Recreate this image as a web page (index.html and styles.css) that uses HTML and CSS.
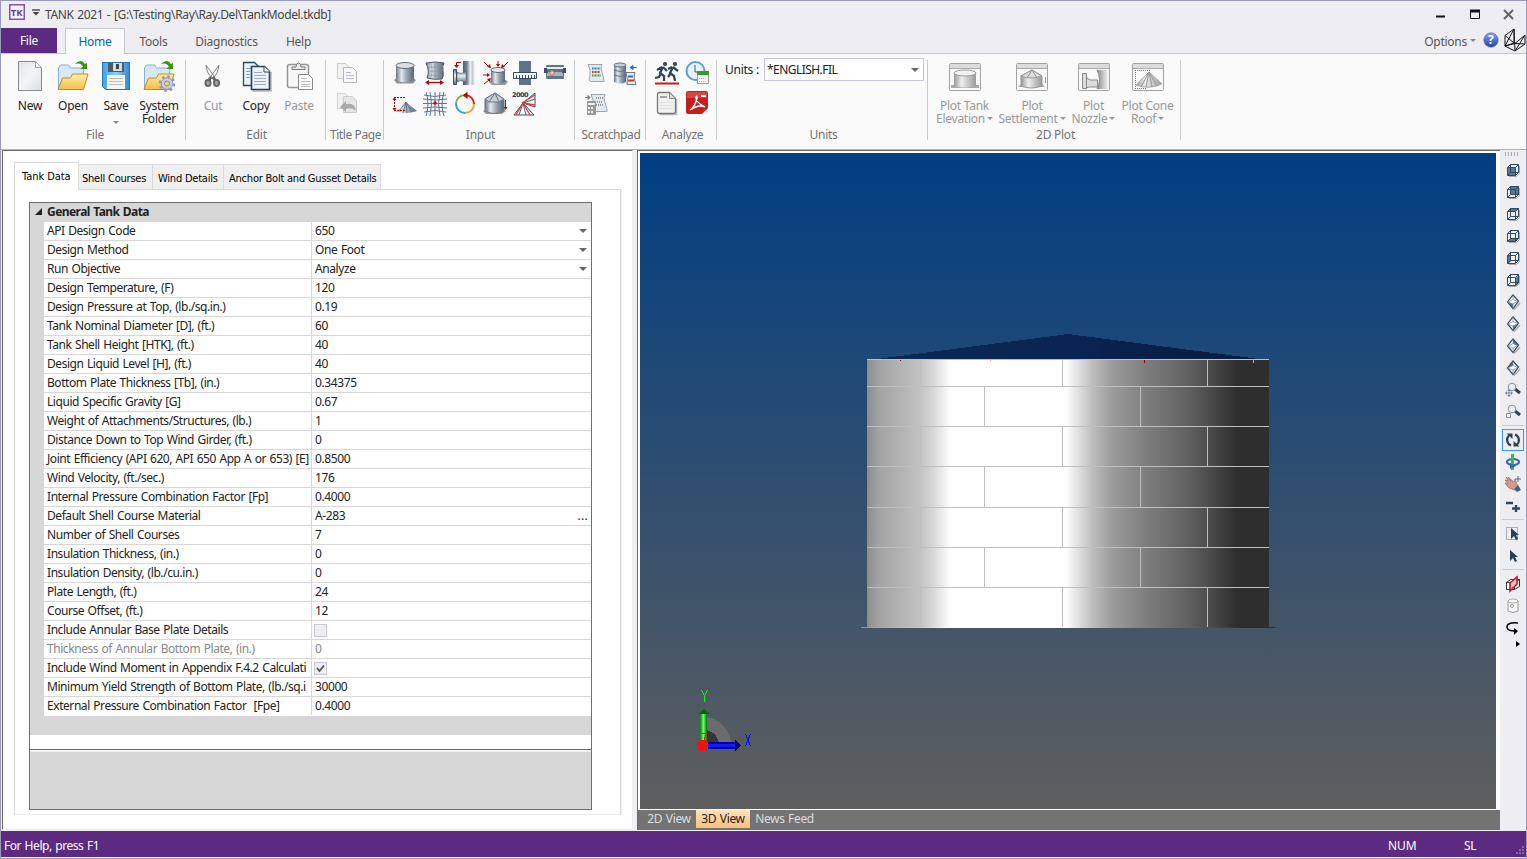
FILE: index.html
```
<!DOCTYPE html>
<html lang="en">
<head>
<meta charset="utf-8">
<title>TANK 2021</title>
<link rel="stylesheet" href="styles.css">
</head>
<body>
<svg class="defs" width="0" height="0">
<defs>
<linearGradient id="steel"><stop offset="0" stop-color="#66768a"/><stop offset=".3" stop-color="#e4e8ec"/><stop offset=".6" stop-color="#98a4b0"/><stop offset="1" stop-color="#56677a"/></linearGradient>
<linearGradient id="pipe"><stop offset="0" stop-color="#4c5e72"/><stop offset=".35" stop-color="#7b8a9a"/><stop offset=".6" stop-color="#eef1f4"/><stop offset=".8" stop-color="#c0c8d0"/><stop offset="1" stop-color="#fafafa"/></linearGradient>
<linearGradient id="neck" x2="0" y2="1"><stop offset="0" stop-color="#5f7084"/><stop offset=".4" stop-color="#eef1f4"/><stop offset="1" stop-color="#5a6b7e"/></linearGradient>
<linearGradient id="gsteel"><stop offset="0" stop-color="#999"/><stop offset=".35" stop-color="#eee"/><stop offset="1" stop-color="#999"/></linearGradient>
<linearGradient id="gpipe"><stop offset="0" stop-color="#888"/><stop offset="1" stop-color="#f4f4f4"/></linearGradient>
<linearGradient id="paper" x2="1" y2="1"><stop offset="0" stop-color="#dfe4e9"/><stop offset=".5" stop-color="#f4f5f7"/><stop offset="1" stop-color="#d9dee4"/></linearGradient>
<linearGradient id="folder" x2="0" y2="1"><stop offset="0" stop-color="#fff0ac"/><stop offset="1" stop-color="#f6bb45"/></linearGradient>
<linearGradient id="blue" x2="1" y2="0"><stop offset="0" stop-color="#37a1ed"/><stop offset=".5" stop-color="#8cd3fb"/><stop offset="1" stop-color="#3187cf"/></linearGradient>
<linearGradient id="help" x2="0" y2="1"><stop offset="0" stop-color="#8aa6ec"/><stop offset="1" stop-color="#1c3fae"/></linearGradient>
<g id="opened">
<path d="M2.500 28V8l2-3h8l2 3h13v6" fill="#d6e9fa" stroke="#8fb0d3"/>
<path d="M2 29.500 6.500 18h8l2-4H32L27.500 29.500z" fill="url(#folder)" stroke="#c58a20"/>
<path d="M19 4q6-6 10 0l2-1v6h-7l3-2q-2-5-8-3z" fill="#389312"/>
</g>
<g id="cube"><path d="M4 14.500h7.500l3-3V4" fill="none" stroke="#aaa"/><path d="M2.500 5.500h8v8h-8zM5.500 2.500h8v8h-8zM2.500 5.500l3-3M10.500 5.500l3-3M10.500 13.500l3-3M2.500 13.500l3-3" fill="none" stroke="#2e4a66"/></g>
<g id="iso"><path d="m9 15.500 6-6.500" stroke="#aaa" stroke-width="1.500"/><path d="M8 1 13.500 7 8 14.500 2.500 8z" fill="none" stroke="#2e4a66" stroke-width="1.200"/><path d="m2.500 8 5.500 2L13.500 7M8 10v4.500M8 1v4.500L3 8M8 5.500 13 7.500" fill="none" stroke="#6f8496" stroke-width=".7"/></g>
<g id="lens"><path d="m10 7 5 4" stroke="#2e4357" stroke-width="3"/><circle cx="7" cy="5" r="3.800" fill="#e8eef4" stroke="#7e8ea0"/></g>
<g id="frame"><rect x=".5" y=".5" width="31" height="27" rx="1" fill="#fafafa" stroke="#a3a3a3"/><path d="M1 1h30v4H1z" fill="#dcdcdc"/><path d="M1 5.500h30" stroke="#aaa"/></g>
<g id="scroll"><path d="M3 2.500h14q-2 3 0 8t2 9H6q-3-1-1-6 1-6-2-11z" fill="#e4e9ee" stroke="#9aa5b1"/></g>
</defs>
</svg>
<div class="window">
<header class="titlebar">
<svg class="logo" width="16" height="16"><rect x=".75" y=".75" width="14.500" height="14.500" fill="#f7f2fb" stroke="#8055ab" stroke-width="1.500"/><text x="1.800" y="11.500" class="logotext">TK</text></svg>
<svg class="quick" width="8" height="8"><path d="M0 1h8" stroke="#444" stroke-width="1.400"/><path d="M0.500 3h7L4 6.500z" fill="#444"/></svg>
<span class="title">TANK 2021 - [G:\Testing\Ray\Ray.Del\TankModel.tkdb]</span>
<svg class="winbtns" width="90" height="18"><path d="M6 11.500h9" stroke="#111" stroke-width="2"/><path d="M40.500 5.500h9v8h-9z" fill="none" stroke="#111"/><path d="M40 6h10" stroke="#111" stroke-width="3"/><path d="m74 5 9 9m0-9-9 9" stroke="#666" stroke-width="2"/></svg>
</header>
<nav class="tabs">
<div class="tab file">File</div><div class="tab home">Home</div><div class="tab t3">Tools</div><div class="tab t4">Diagnostics</div><div class="tab t5">Help</div>
<div class="options"><span>Options</span><i class="caret"></i>
<svg width="16" height="16"><circle cx="8" cy="8" r="7.200" fill="url(#help)" stroke="#3c5cb4" stroke-width=".6"/><text x="5" y="12" class="q">?</text></svg>
<svg width="24" height="24"><path d="M2 7.500 11 1v14L2 18zM2 7.500 11 15M2 18 11 1M2 18l10 5 10-7V7L12 15.500 2 18M11 1l1 22M12 15.500 22 16M12 23 22 7" fill="none" stroke="#161616"/></svg></div>
</nav>
<section class="ribbon">
<div class="group g1"><div class="tools">
<div class="big"><svg width="32" height="32"><path d="M4.500 1.500h17l6 6v23h-23z" fill="url(#paper)" stroke="#878c92"/><path d="M21.500 1.500v6h6z" fill="#fff" stroke="#a0a4aa"/></svg><b>New</b></div>
<div class="big"><svg width="34" height="32"><use href="#opened"/></svg><b>Open</b></div>
<div class="big"><svg width="32" height="32"><path d="M2.500 2.500h27v27h-24l-3-3z" fill="url(#blue)" stroke="#2874b4"/><path d="M8 3h16v9H8z" fill="#53585e"/><path d="M13 3h9v8h-9z" fill="#d5dbe0"/><path d="M16 4h3v5h-3z" fill="#444"/><path d="M7 15h18v14H7z" fill="#f5f5f5"/><path d="M9 18.500h14M9 21.500h14M9 24.500h14" stroke="#bbb"/></svg><b>Save</b><i class="caret low"></i></div>
<div class="big"><svg width="34" height="32"><use href="#opened"/><g transform="translate(25 23.500)"><circle r="7" fill="none" stroke="#8b9cba" stroke-width="2.600" stroke-dasharray="2.750 2.750"/><circle r="5.800" fill="#c4cfdf" stroke="#8798b5"/><circle r="2.500" fill="#f8ce68" stroke="#7c8fae"/></g></svg><b>System<br>Folder</b></div>
</div><div class="cap">File</div></div>
<div class="group g2"><div class="tools">
<div class="big off"><svg width="32" height="32"><path d="M9 5q0 7 6 14l2-3zM22 5q0 7-6 14l-2-3z" fill="#f7f7f7" stroke="#8a8a8a"/><path d="m14 17-4 6m6-6 4 6" stroke="#666" stroke-width="3"/><ellipse cx="11" cy="23" rx="2.500" ry="3" fill="#aaa" stroke="#666" stroke-width="2"/><ellipse cx="19.500" cy="23" rx="2.500" ry="3" fill="#aaa" stroke="#666" stroke-width="2"/></svg><b>Cut</b></div>
<div class="big"><svg width="32" height="32"><path d="M3.500 2.500h11l4 4v19h-15z" fill="#e9f0f6" stroke="#2c4a66" stroke-width="1.300"/><path d="M6 8.500h7M6 11.500h4M6 14.500h4M6 17.500h4" stroke="#8aa0b6"/><path d="M12.500 31H31V12" fill="none" stroke="#bbb" stroke-width="1.500"/><path d="M11.500 6.500h13l5 5v18h-18z" fill="#edf3f8" stroke="#24425e" stroke-width="1.600"/><path d="M24 6.500v5.500h6" fill="#fff" stroke="#24425e"/><path d="M14 12.500h8M14 15.500h12M14 18.500h12M14 21.500h12M14 24.500h12" stroke="#9aadc0"/></svg><b>Copy</b></div>
<div class="big off"><svg width="32" height="32"><rect x="4.500" y="4.500" width="21" height="23" rx="2" fill="#f7f7f7" stroke="#969696" stroke-width="1.500"/><path d="M9 9.500h13V7h-4q0-4-2.500-4T13 7H9z" fill="#eee" stroke="#777"/><path d="M15.500 14.500h10l4 4v11h-14z" fill="#fff" stroke="#888"/><path d="M18 18.500h6M18 21.500h9M18 24.500h9M18 26.500h9" stroke="#bbb"/></svg><b>Paste</b></div>
</div><div class="cap">Edit</div></div>
<div class="group g3"><div class="tools smalls">
<svg width="24" height="24"><path d="M2.500 2.500h8l3 3v12h-11z" fill="#f2f2f2" stroke="#ccc"/><path d="M8.500 6.500h9l4 4v11h-13z" fill="#f7f7fa" stroke="#b4b4b4"/><path d="M11 11.500h5M11 14.500h8M11 17.500h8" stroke="#bcbcdc"/></svg>
<svg width="24" height="24"><path d="M2.500 2.500h8l3 3v12h-11z" fill="#f2f2f2" stroke="#d4d4d4"/><path d="M8.500 5.500h9l4 4v12h-13z" fill="#e6e6e6" stroke="#ccc"/><path d="m5 16 6-6v3q9-2 10 7-4-4-10-2v3z" fill="#aaa"/></svg>
</div><div class="cap">Title Page</div></div>
<div class="group g4"><div class="tools grid">
<svg width="24" height="24"><path d="M1 19 4 22.500H20L23 19 20 17H4z" fill="#8b9094"/><path d="M3 5v14q9 5 18 0V5z" fill="url(#steel)"/><ellipse cx="12" cy="4.500" rx="9" ry="3" fill="#dde1e5" stroke="#5d6b79"/></svg>
<svg width="24" height="24"><path d="M3 2q9-2 18 0-2 3-1 8t-1 8q-8 1-15-1 3-7-1-15z" fill="url(#steel)" stroke="#4a5a6a"/><path d="M4 6q8 1 16-1M5 10q8 1 15-1M5 14q8 1 14 0M8 2q2 8 0 15M12 1v17M16 1q-1 8 0 17" stroke="#8493a2" stroke-width=".7" fill="none"/><path d="M5 21.500h14" stroke="#c00000" stroke-width="1.300"/><path d="m2 21.500 4-2.500v5zM21 21.500 17 19v5z" fill="#c00000"/></svg>
<svg width="24" height="24"><path d="M10 0h12v24H10z" fill="url(#pipe)"/><path d="M4 11q5 3 9-1v12q-4-4-9-1z" fill="url(#neck)" stroke="#506172" stroke-width=".6"/><path d="M.5 8.500h3v15h-3z" fill="url(#neck)" stroke="#405266"/><path d="M8 1.500H3.500V4" fill="none" stroke="#c00000"/><path d="m1 4 2.500 3L6 4z" fill="#c00000"/></svg>
<svg width="26" height="24"><path d="M6 21 9 19h14l2 2-3 3H9z" fill="#999"/><path d="M8 9v12q7 4 14 0V9z" fill="url(#steel)"/><ellipse cx="15" cy="9" rx="7" ry="2.500" fill="#e3e7ea" stroke="#5d6b79"/><path d="m1 1 5 5M15 0v4M25 1l-5 5M0 14h6M1 23l5-4" stroke="#c00000"/><path d="m4 6 4 1-1-4zM13 3h4l-2 3zM19 3l-1 4 4-1zM4 12l3 2-3 2zM4 18l4-1-1 4z" fill="#c00000"/></svg>
<svg width="24" height="24"><path d="M6 0h12v24H6z" fill="#60738b"/><path d="M.5 11.500h23v6H.5z" fill="#f3f4f5" stroke="#354b63"/><path d="M3.500 17v-3M6.500 17v-3M9.500 17v-3M12.500 17v-3M15.500 17v-3M18.500 17v-3M21.500 17v-3" stroke="#354b63"/></svg>
<svg width="24" height="24"><rect x="3" y="4" width="18" height="14" rx="1" fill="#60748a"/><path d="M3 6h18v2H3z" fill="#e5ebef"/><path d="M4 11h16v4H4z" fill="#a8b3be"/><path d="M1 7h3l1 5H1zM23 7h-3l-1 5h4z" fill="#3c5066"/><circle cx="9" cy="12" r="2.200" fill="#f4c4b8" stroke="#dc6b52"/></svg>
<svg width="24" height="24"><path d="m2 19 5-2 6-7 11 9q-11 4-22 0z" fill="url(#steel)"/><path d="m13 10-7 9m7-9-3 11m3-11 1 11m-1-11 6 10" stroke="#576676" stroke-width=".8"/><path d="M1.500 7v10M1 5.500h12M1 18.500h12" stroke="#c00000" stroke-dasharray="2 1"/><path d="m-.5 8 2-3 2 3zM-.5 16l2 3 2-3z" fill="#c00000"/></svg>
<svg width="24" height="24"><path d="M1 3q10 3 22 0M0 7q12 2 24 0M0 11.500h24M0 16q12-2 24 0M1 20q11-3 22 0M3 0q4 12 0 24M7 0q3 12 0 24M12 0v24M17 0q-3 12 0 24M21 0q-4 12 0 24" fill="none" stroke="#60758b"/><circle cx="12" cy="11" r="1.700" fill="#d00"/></svg>
<svg width="24" height="24"><path d="M12 3a9 9 0 0 1 9 9" fill="none" stroke="#d2232a" stroke-width="2"/><path d="M21 12a9 9 0 0 1-9 9" fill="none" stroke="#f7a02d" stroke-width="2"/><path d="M12 21a9 9 0 0 1-9-9" fill="none" stroke="#33a2da" stroke-width="2"/><path d="M3 12a9 9 0 0 1 9-9" fill="none" stroke="#7cb93e" stroke-width="2"/><path d="M14.500-.5v7.500L10 3.500z" fill="#c00000"/></svg>
<svg width="24" height="24"><path d="M0 19 3 22H19L23 19 20 17H4z" fill="#999"/><path d="M2 7 12 1l9 6v12q-10 5-19 0z" fill="url(#steel)" stroke="#6c7885"/><path d="m2 7 10-6 9 6-5 3H6zM12 1 6 10m6-9 4 9" fill="#c5cdd4" stroke="#6c7885"/><path d="M22.500 8v8" stroke="#c00000"/><path d="m20.500 15 2 3 2-3z" fill="#c00000"/></svg>
<svg width="24" height="24"><path d="M10 11 22 1v14zM10 11l11 12H1z" fill="none" stroke="#3c5064"/><path d="m10 11 12-4M10 11 6 23m4-12 3 12" stroke="#506478"/><path d="M9 11 22 3M10 11l12 2M10 11 3 23m7-12 7 12" stroke="#d84040" stroke-width="1.400"/><text x="-1" y="4.500" class="y2000">2000</text></svg>
</div><div class="cap">Input</div></div>
<div class="group g5"><div class="tools grid2">
<svg width="24" height="24"><use href="#scroll"/><path d="M7 6.500h8" stroke="#3477b5" stroke-width="2" stroke-dasharray="1 .5"/><path d="M7 10h8" stroke="#c33" stroke-width="2" stroke-dasharray="1 .5"/><path d="M7 13.500h9" stroke="#3a9a3a" stroke-width="2" stroke-dasharray="1 .5"/></svg>
<svg width="24" height="24"><path d="M1 3v17q7 3 12 0V3z" fill="url(#steel)"/><path d="M1 8q6 3 12 0M1 13q6 3 12 0" fill="none" stroke="#66798b"/><ellipse cx="7" cy="3" rx="6" ry="2" fill="#c5cdd4" stroke="#607080"/><path d="M18 5.500h6M17 5.500l3-2v4z" stroke="#2c73b5" fill="#2c73b5"/><path d="M13 10.500h9q-2 4 1 12h-9q1-5-1-12z" fill="#e8ebee" stroke="#6c7b89"/><path d="M15 14.500h5" stroke="#2c73b5" stroke-width="2"/><path d="M15 18.500h6" stroke="#c33" stroke-width="2"/></svg>
<svg width="24" height="24"><g transform="translate(3 0)"><use href="#scroll"/></g><path d="M11 6h7m-8 4h7m-6 3h7" stroke="#999" stroke-width="2" stroke-dasharray="1 1"/><path d="M0 5.500h5m0 0L3 3.500v4z" stroke="#888"/><path d="M2 9h9v14H2z" fill="#999"/><path d="M3 11h7v2H3zM3 15h2v2H3zM6 15h2v2H6zM3 19h2v2H3zM6 19h2v2H6z" fill="#eee"/></svg>
</div><div class="cap">Scratchpad</div></div>
<div class="group g6"><div class="tools grid2 an">
<svg width="24" height="24"><path d="m8 6-3 6 4 3v5M6 12l-2 4-4 1M8 6l4 4M7 6 2 9M18 6l-3 6 4 3 1 5M16 12l-3 4M18 6l5 4M17 6l-4 2" fill="none" stroke="#31455a" stroke-width="2.300"/><circle cx="10" cy="3" r="2.100" fill="#31455a"/><circle cx="20" cy="3" r="2.100" fill="#31455a"/><path d="M0 22.500h24" stroke="#d01919" stroke-width="2"/></svg>
<svg width="24" height="24"><circle cx="10.500" cy="10" r="9" fill="#e6f2fb" stroke="#57a2d4" stroke-width="2"/><path d="M10 4v7h7" stroke="#555" fill="none"/><path d="M12.500 11.500h11v11h-11z" fill="#fff" stroke="#999"/><path d="M12 10h12v4H12z" fill="#3b982a"/><path d="M14 17.500h8M14 20.500h8" stroke="#aaa" stroke-dasharray="1 1"/></svg>
<svg width="24" height="24"><path d="M4.500 23.500h17V8" fill="none" stroke="#bbb" stroke-width="1.500"/><path d="M4.500 1.500h10l6 6v13q0 2-2 2h-14q-2 0-2-2v-17q0-2 2-2z" fill="#f1f1f1" stroke="#777" stroke-width="1.300"/><path d="M14.500 1.500v6h6z" fill="#ddd" stroke="#888"/><path d="M5 6h7" stroke="#888" stroke-width="1.500"/><path d="M5 11.500h13M5 14.500h13M5 17.500h13" stroke="#e0e0e0"/></svg>
<svg width="24" height="24"><rect x="1" y="0" width="22" height="23" rx="2" fill="#c3201d"/><path d="M2 1h20v6H2z" fill="#d94540"/><path d="M5 19q5-3 7-12 0-3-1-1-1 5 9 10-6-3-15 3z" fill="none" stroke="#fff" stroke-width="1.400"/><path d="m17 23 6-6v6z" fill="#eee"/><path d="M16 5h5" stroke="#fff" stroke-width="2"/></svg>
</div><div class="cap">Analyze</div></div>
<div class="group g7"><div class="tools units"><span>Units :</span><div class="combo"><span>*ENGLISH.FIL</span><i class="caret dark"></i></div></div><div class="cap">Units</div></div>
<div class="group g8"><div class="tools">
<div class="big off p1"><svg width="32" height="32"><g transform="translate(0 3)"><use href="#frame"/><path d="M2 22h28v3H2z" fill="#aaa"/><path d="M5 10v13q11 3 22 0V10z" fill="url(#gsteel)"/><ellipse cx="16" cy="10" rx="11" ry="3" fill="#f2f2f2" stroke="#999"/></g></svg><b>Plot Tank<br>Elevation<i class="caret"></i></b></div>
<div class="big off p2"><svg width="32" height="32"><g transform="translate(0 3)"><use href="#frame"/><path d="M2 24h27l-3-3H5z" fill="#aaa"/><path d="M5 13v10q10 4 21 0V13L16 7z" fill="url(#gsteel)" stroke="#999"/><path d="m5 13 11-6 10 6q-11 4-21 0zM16 7l-5 8m5-8 5 8M29.500 14v6" stroke="#999" fill="#ddd"/></g></svg><b>Plot<br>Settlement<i class="caret"></i></b></div>
<div class="big off p3"><svg width="32" height="32"><g transform="translate(0 3)"><use href="#frame"/><path d="M19 7h11v19H19q5-10 0-19z" fill="url(#gpipe)"/><path d="M4.500 10.500h4v15h-4zM8.500 14q2 3 4 3h7v7h-7q-2 0-4 1z" fill="#ddd" stroke="#888"/><path d="M19 7q5 10 0 19" fill="none" stroke="#888"/></g></svg><b>Plot<br>Nozzle<i class="caret"></i></b></div>
<div class="big off p4"><svg width="32" height="32"><g transform="translate(0 3)"><use href="#frame"/><path d="m4 22 13-13 13 12q-13 6-26 1z" fill="url(#gsteel)" stroke="#aaa"/><path d="M17 9 9 24m8-15-3 15m3-15 3 15m-3-15 8 14" stroke="#999"/><path d="M3.500 7v18M3 7.500h15M3 25.500h12" stroke="#777" stroke-dasharray="1 1"/></g></svg><b>Plot Cone<br>Roof<i class="caret"></i></b></div>
</div><div class="cap">2D Plot</div></div>
</section>
<main class="main">
<section class="left">
<div class="ltabs"><div class="active">Tank Data</div><div class="l2">Shell Courses</div><div class="l3">Wind Details</div><div class="l4">Anchor Bolt and Gusset Details</div></div>
<div class="page"><div class="props">
<div class="head"><svg width="7" height="7"><path d="M7 0v7H0z" fill="#222"/></svg>General Tank Data</div>
<div class="rows">
<div class="row"><span>API Design Code</span><em>650<i class="caret dark"></i></em></div>
<div class="row"><span>Design Method</span><em>One Foot<i class="caret dark"></i></em></div>
<div class="row"><span>Run Objective</span><em>Analyze<i class="caret dark"></i></em></div>
<div class="row"><span>Design Temperature, (F)</span><em>120</em></div>
<div class="row"><span>Design Pressure at Top, (lb./sq.in.)</span><em>0.19</em></div>
<div class="row"><span>Tank Nominal Diameter [D], (ft.)</span><em>60</em></div>
<div class="row"><span>Tank Shell Height [HTK], (ft.)</span><em>40</em></div>
<div class="row"><span>Design Liquid Level [H], (ft.)</span><em>40</em></div>
<div class="row"><span>Bottom Plate Thickness [Tb], (in.)</span><em>0.34375</em></div>
<div class="row"><span>Liquid Specific Gravity [G]</span><em>0.67</em></div>
<div class="row"><span>Weight of Attachments/Structures, (lb.)</span><em>1</em></div>
<div class="row"><span>Distance Down to Top Wind Girder, (ft.)</span><em>0</em></div>
<div class="row"><span>Joint Efficiency (API 620, API 650 App A or 653) [E]</span><em>0.8500</em></div>
<div class="row"><span>Wind Velocity, (ft./sec.)</span><em>176</em></div>
<div class="row"><span>Internal Pressure Combination Factor [Fp]</span><em>0.4000</em></div>
<div class="row"><span>Default Shell Course Material</span><em>A-283<u>...</u></em></div>
<div class="row"><span>Number of Shell Courses</span><em>7</em></div>
<div class="row"><span>Insulation Thickness, (in.)</span><em>0</em></div>
<div class="row"><span>Insulation Density, (lb./cu.in.)</span><em>0</em></div>
<div class="row"><span>Plate Length, (ft.)</span><em>24</em></div>
<div class="row"><span>Course Offset, (ft.)</span><em>12</em></div>
<div class="row"><span>Include Annular Base Plate Details</span><em><s></s></em></div>
<div class="row dim"><span>Thickness of Annular Bottom Plate, (in.)</span><em>0</em></div>
<div class="row"><span>Include Wind Moment in Appendix F.4.2 Calculati</span><em><s><svg width="11" height="11"><path d="m2 5 2.500 3L9 2.500" fill="none" stroke="#555" stroke-width="1.800"/></svg></s></em></div>
<div class="row"><span>Minimum Yield Strength of Bottom Plate, (lb./sq.i</span><em>30000</em></div>
<div class="row"><span>External Pressure Combination Factor &nbsp;[Fpe]</span><em>0.4000</em></div>
</div>
<div class="blank"></div><div class="desc"></div>
</div></div>
</section>
<section class="right">
<svg class="scene" width="856" height="656" viewBox="640 153 856 656" shape-rendering="crispEdges">
<defs>
<linearGradient id="bg" x2="0" y2="1"><stop offset="0" stop-color="#003e82"/><stop offset="1" stop-color="#5e5e5e"/></linearGradient>
<linearGradient id="shell"><stop offset="0" stop-color="#8d8d8d"/><stop offset=".03" stop-color="#a3a3a3"/><stop offset=".08" stop-color="#b2b2b2"/><stop offset=".13" stop-color="#c1c1c1"/><stop offset=".165" stop-color="#d8d8d8"/><stop offset=".208" stop-color="#fff"/><stop offset=".495" stop-color="#fff"/><stop offset=".52" stop-color="#e6e6e6"/><stop offset=".56" stop-color="#bebebe"/><stop offset=".61" stop-color="#9b9b9b"/><stop offset=".7" stop-color="#7c7c7c"/><stop offset=".8" stop-color="#606060"/><stop offset=".86" stop-color="#484848"/><stop offset=".92" stop-color="#2e2e2e"/><stop offset="1" stop-color="#2e2e2e"/></linearGradient>
<linearGradient id="roof"><stop offset="0" stop-color="#0b2852"/><stop offset=".5" stop-color="#0a2554"/><stop offset=".65" stop-color="#092149"/><stop offset="1" stop-color="#061c3d"/></linearGradient>
<linearGradient id="ga"><stop offset="0" stop-color="#008000"/><stop offset=".5" stop-color="#6cff6c"/><stop offset="1" stop-color="#007000"/></linearGradient>
</defs>
<rect x="640" y="153" width="856" height="656" fill="url(#bg)"/>
<path d="M877 359 1068 334 1259 359z" fill="url(#roof)"/>
<rect x="867" y="359" width="402" height="268" fill="url(#shell)"/>
<rect x="861" y="627" width="414" height="1" fill="url(#shell)"/>
<path d="M867 359.500h402M867 386.500h402M867 426.500h402M867 466.500h402M867 507.500h402M867 547.500h402M867 587.500h402M1062.500 359v27M1207.500 359v27M984.500 387v39M1140.500 387v39M1062.500 427v39M1207.500 427v39M984.500 467v40M1140.500 467v40M1062.500 508v39M1207.500 508v39M984.500 548v39M1140.500 548v39M1062.500 588v39M1207.500 588v39M920.500 360v26M920.500 427v39M920.500 508v39M920.500 588v39" fill="none" stroke="#bfbfbf"/>
<path d="M900.500 360v1M1144.500 360v3" stroke="#8c0000"/><path d="M990.500 360v1M1253.500 360v3" stroke="#f0a0a0"/>
<path d="M704 717a28 28 0 0 1 27 28h-27z" fill="#6a6c6f"/><path d="M704 730a15 15 0 0 1 15 15h-15z" fill="#363636"/>
<path d="M700 713h7v30h-7z" fill="url(#ga)"/><path d="m698 714 6-6 5 6z" fill="#006b00"/>
<path d="M706 742h29v7h-29z" fill="#0000a0"/><path d="M706 744h29v3h-29z" fill="#1717ff"/><path d="m735 740 6 5.500-6 5.500z" fill="#00006c"/>
<circle cx="703" cy="745.500" r="5.700" fill="#ee1212"/><path d="M700.500 733.500h6l-4 10h5" fill="none" stroke="#f11"/>
<path d="m701.500 690 3 6 3-6M704.500 696v6" fill="none" stroke="#0f0"/><path d="m745.500 734 5 12M750.500 734l-5 12" stroke="#0010ff"/>
</svg>
<div class="vtabs"><div class="v1">2D View</div><div class="v2">3D View</div><div class="v3">News Feed</div></div>
</section>
<aside class="bar">
<div class="grip"></div>
<svg><path d="M3 6h8v8H3z" fill="#60748a"/><use href="#cube"/></svg>
<svg><path d="M6 3h8v8H6z" fill="#60748a"/><use href="#cube"/></svg>
<svg><path d="m3 5 3-3h8l-3 3z" fill="#60748a"/><use href="#cube"/></svg>
<svg><path d="m3 13 3-3h8l-3 3z" fill="#60748a"/><use href="#cube"/></svg>
<svg><path d="m3 6 3-3v8l-3 3z" fill="#60748a"/><use href="#cube"/></svg>
<svg><path d="m11 6 3-3v8l-3 3z" fill="#60748a"/><use href="#cube"/></svg>
<svg><path d="M8 1 13.500 7 8 14.500 2.500 8z" fill="#fff"/><path d="m3 8 5 2v4z" fill="#60748a"/><use href="#iso"/></svg>
<svg><path d="M8 1 13.500 7 8 14.500 2.500 8z" fill="#fff"/><path d="m13 8-5 2v4z" fill="#60748a"/><use href="#iso"/></svg>
<svg><path d="M8 1 13.500 7 8 14.500 2.500 8z" fill="#fff"/><path d="m8 1 5.500 6-1 1L8 5.500z" fill="#60748a"/><use href="#iso"/></svg>
<svg><path d="M8 1 13.500 7 8 14.500 2.500 8z" fill="#fff"/><path d="M8 1 2.500 8 8 5.500z" fill="#60748a"/><use href="#iso"/></svg>
<svg><use href="#lens"/><path d="M1 11h6M4 8v6" stroke="#7688a0"/><path d="m0 11 2-2v4zM8 11 6 9v4zM4 7 2 9h4zM4 15l-2-2h4z" fill="#7688a0"/></svg>
<svg><use href="#lens"/><path d="M1.500 9.500h4v4h-4z" fill="#fff" stroke="#8090a0"/></svg>
<hr>
<div class="sel"><svg><path d="M6 13.500a6 6 0 0 1-2-10M10 2.500a6 6 0 0 1 2 10" fill="none" stroke="#2e4357" stroke-width="2.200"/><path d="M1.500 1.500h6v5.500zM14.500 14.500h-6V9z" fill="#2e4357"/></svg></div>
<svg><ellipse cx="8" cy="8" rx="6" ry="3" fill="none" stroke="#3466b5" stroke-width="2.200"/><path d="M7.500 0v16" stroke="#3ac22c" stroke-width="3"/><path d="m5 9 6 3-6 3z" fill="#3466b5"/></svg>
<svg><path d="m1 1 5 4-3-4 6 5 1-3 3 8-3 3-6-2-4-5 3 1-3-4 3 1z" fill="#d49a8e" stroke="#9e665f" stroke-width=".7"/><path d="m9 13 4-4 3 5-4 2z" fill="#426182"/><path d="M13 0v6M10 3h6" stroke="#4a6884"/></svg>
<svg><path d="M1 5h7M7 10.500h8M11 7v7" stroke="#2e4a63" stroke-width="2.400"/></svg>
<hr>
<svg><path d="M1.500 1.500h11v12h-11z" fill="none" stroke="#5f7386" stroke-dasharray="1 1"/><path d="M6 2v11l3-3 2 4 2-1-2-4h3z" fill="#233f59"/></svg>
<svg><path d="M5 2v11l3-3 2 4 2-1-2-4h3z" fill="#233f59"/></svg>
<hr>
<svg><path d="M1.500 6.500h8v7h-8zM5.500 3.500h9v7l-5 3M1.500 6.500l4-3M9.500 6.500l5-3" fill="#fff" stroke="#333"/><path d="m5 15V7l7-6v7z" fill="#e8c4c4" stroke="#d0101c" stroke-width="1.600"/></svg>
<svg><path d="M3 3v10q5 3 10 0V3" fill="#f8f8f8" stroke="#999"/><ellipse cx="8" cy="3" rx="5" ry="2" fill="#fff" stroke="#aaa"/><circle cx="7" cy="8" r="1.500" fill="none" stroke="#999"/></svg>
<svg><path d="M13 3Q2 2 2 7q0 4 8 4" fill="none" stroke="#000" stroke-width="1.500"/><path d="m9 8 4 3-4 4z"/></svg>
<div class="more"></div>
</aside>
</main>
<footer class="status"><span>For Help, press F1</span><span class="num">NUM</span><span class="sl">SL</span><svg width="12" height="12"><path d="M7 4v2M10 1v2M10 4v2M4 7v2M7 7v2M10 7v2" stroke="#9679b2" stroke-width="1.500"/></svg></footer>
</div>
</body>
</html>
```

FILE: styles.css
```
* { box-sizing: border-box; }
body { margin: 0; font: 12px "Noto Sans", "Open Sans", sans-serif; color: #222; background: #eeeef2; letter-spacing: -0.44px; word-spacing: 0.8px; overflow: hidden; }
b, em, i, u, s { font-weight: normal; font-style: normal; text-decoration: none; }
svg { display: block; flex: none; overflow: visible; }
.defs { position: absolute; }
.window { width: 1527px; height: 859px; border: 1px solid #9a9abb; display: flex; flex-direction: column; }
.titlebar { height: 27px; display: flex; padding-left: 8px; color: #444; flex: none; }
.logo { margin-top: 3px; }
.logotext { font: bold 9.5px "Open Sans", sans-serif; fill: #68409a; letter-spacing: 0; }
.quick { margin: 8px 0 0 7px; }
.title { margin-left: 5px; line-height: 27px; white-space: nowrap; letter-spacing: -0.35px; }
.winbtns { margin: 4px 6px 0 auto; }
.tabs { height: 26px; display: flex; border-bottom: 1px solid #c8c8cc; flex: none; color: #555; letter-spacing: -0.25px; }
.tab { line-height: 27px; text-align: center; }
.file { width: 56px; height: 25px; line-height: 25px; background: #5c2a81; color: #fff; }
.home { width: 60px; height: 26px; margin-left: 8px; border: 1px solid #c8c8cc; border-bottom: 0; background: #fafafa; color: #0067b8; line-height: 26px; }
.t3 { width: 57px; }
.t4 { width: 89px; }
.t5 { width: 55px; }
.options { margin-left: auto; display: flex; align-items: center; color: #555; }
.options span { padding-top: 1px; }
.options svg:first-of-type { margin: -2px 5px 0 7px; }
.options svg:last-of-type { margin: -2px -1px 0 -1px; }
.options .caret { margin-left: 3px; }
.q { font: bold 12px "Open Sans", sans-serif; fill: #fff; }
.caret { display: inline-block; border: 3px solid transparent; border-top-color: #888; border-bottom: 0; }
.caret.dark { border-width: 4px 4px 0; border-top-color: #666; margin-right: 1px; }
.ribbon { height: 95px; background: #fafafa; display: flex; flex: none; padding-top: 6px; letter-spacing: -0.25px; word-spacing: 0; }
.group { height: 80px; border-right: 1px solid #c9c9ce; display: flex; flex-direction: column; flex: none; }
.g1 { width: 185px; padding-left: 3px; }
.g2 { width: 140px; padding-left: 1px; }
.g3 { width: 58px; }
.g4 { width: 191px; }
.g5 { width: 71px; }
.g6 { width: 71px; }
.g7 { width: 211px; }
.g8 { width: 253px; }
.tools { flex: 1; display: flex; justify-content: center; min-height: 0; }
.g8 .tools { justify-content: flex-start; padding-left: 3px; }
.cap { height: 14px; line-height: 14px; margin-bottom: -2px; padding-left: 3px; text-align: center; color: #737373; white-space: nowrap; }
.g1 .cap, .g2 .cap { padding-left: 1px; }
.g3 .cap, .g5 .cap { letter-spacing: -0.4px; padding-left: 2px; }
.big { width: 43px; display: flex; flex-direction: column; align-items: center; white-space: nowrap; text-align: center; flex: none; color: #222; }
.big b { line-height: 13px; margin-top: 7px; }
.big.off { color: #999; }
.big b .caret { margin: 0 0 3px 2px; border-top-color: #999; }
.low { margin-top: 9px; }
.p1 { width: 67px; }
.p2 { width: 68px; }
.p3 { width: 55px; }
.p4 { width: 53px; }
.smalls { flex-direction: column; align-items: center; justify-content: flex-start; gap: 6px; padding: 1px 16px 0 0; }
.grid { display: grid; grid-template-columns: repeat(6, 30px); grid-auto-rows: 24px; row-gap: 7px; padding-top: 1px; justify-items: start; padding-left: 6px; justify-content: start; margin-left: 3px; }
.grid2 { display: grid; grid-template-columns: 28px 28px; grid-auto-rows: 24px; row-gap: 6px; padding-top: 2px; justify-content: start; padding-left: 10px; }
.an { grid-template-columns: 30px 30px; padding-left: 9px; padding-top: 1px; }
.y2000 { font: bold 6.5px "DejaVu Sans", sans-serif; fill: #223850; letter-spacing: -0.500px; }
.units { justify-content: flex-start; padding-left: 8px; }
.units > span { width: 39px; line-height: 20px; white-space: nowrap; }
.combo { width: 160px; height: 23px; margin-top: -2px; border: 1px solid #c6c6dc; background: #fff; display: flex; align-items: center; justify-content: space-between; padding: 0 3px 0 2px; letter-spacing: -0.55px; }
.main { display: flex; height: 682px; flex: none; border-top: 1px solid #b4b4b4; background: #f0f0f0; }
.left { width: 631px; margin-left: 1px; height: 680px; background: #fff; border: 1px solid #696969; border-right: 1px solid #eee; border-bottom-color: #eee; padding: 11px 11px 0 11px; }
.ltabs { display: flex; align-items: flex-end; height: 27px; font: 11px "DejaVu Sans Condensed", "DejaVu Sans", sans-serif; font-stretch: condensed; letter-spacing: -0.220px; word-spacing: 0; color: #000; }
.ltabs div { height: 25px; line-height: 27px; padding-left: 3px; border: 1px solid #dadada; border-left: 0; border-bottom: 0; background: #f0f0f0; white-space: nowrap; }
.ltabs .active { width: 65px; height: 28px; line-height: 27px; padding-left: 7px; letter-spacing: -0.05px; background: #fff; border-left: 1px solid #dadada; margin-bottom: -1px; }
.ltabs .l2 { width: 74px; }
.ltabs .l3 { width: 71px; padding-left: 5px; }
.ltabs .l4 { width: 157px; padding-left: 5px; }
.page { width: 607px; height: 626px; border: 1px solid #dadada; padding: 12px 0 0 14px; box-shadow: 1px 0 #eee; border-bottom-color: #eee; }
.props { width: 563px; height: 608px; border: 1px solid #6e6e6e; background: #d7d7d7; display: flex; flex-direction: column; }
.head { height: 19px; line-height: 16px; font-weight: bold; padding: 0 0 2px 5px; display: flex; align-items: center; gap: 5px; letter-spacing: -0.55px; flex: none; }
.rows { margin-left: 14px; background: #fff; }
.row { height: 19px; display: flex; border-bottom: 1px solid #d7d7d7; line-height: 17px; }
.row:last-child { height: 18px; border-bottom: 0; margin-bottom: 1px; }
.rows { margin-bottom: -1px; display: flow-root; }
.row span { width: 267px; overflow: hidden; white-space: nowrap; padding-left: 3px; }
.row em { flex: 1; height: 18px; line-height: 17px; border-left: 1px solid #d7d7d7; padding: 0 3px 1px; display: flex; align-items: center; justify-content: space-between; letter-spacing: -0.4px; }
.row u { letter-spacing: 0.3px; }
.row s { width: 13px; height: 13px; border: 1px solid #c7c7dc; background: #ededf2; margin: 1px 0 0 -1px; }
.dim { color: #888; }
.blank { height: 14px; margin-top: 20px; background: #fff; flex: none; }
.desc { flex: 1; border-top: 1px solid #6e6e6e; box-shadow: inset 0 2px #f4f4f4; }
.right { width: 863px; margin-left: 4px; height: 680px; border-top: 1px solid #696969; border-left: 1px solid #696969; background: #fff; padding: 2px 0 0 2px; }
.vtabs { height: 20px; background: #737373; margin: 1px 0 0 -2px; display: flex; color: #ddd; line-height: 17px; text-align: center; letter-spacing: -0.35px; }
.v1 { width: 58px; padding-left: 4px; }
.v2 { width: 54px; background: linear-gradient(#ffe2bd, #ffc077); color: #222; height: 18px; }
.v3 { width: 69px; }
.bar { width: 25px; background: #eeeef2; display: flex; flex-direction: column; align-items: center; }
.bar svg { width: 16px; height: 16px; margin: 3px 0; }
.grip { width: 15px; height: 4px; margin: 2px 0 3px; background: repeating-linear-gradient(90deg, #aaa 0 1px, transparent 1px 3px); }
.bar hr { width: 22px; height: 1px; border: 0; background: #c9c9d8; margin: 2px 0 3px; flex: none; }
.sel { width: 22px; height: 22px; border: 1px solid #3399ff; padding: 0 2px; flex: none; }
.sel svg { margin: 2px 0; }
.more { border: 3px solid transparent; border-left: 4px solid #000; border-right: 0; margin-left: 10px; margin-top: 2px; }
.status { height: 26px; background: #5c2a81; color: #fff; display: flex; line-height: 29px; padding-left: 3px; flex: none; }
.num { margin-left: auto; width: 76px; letter-spacing: -0.1px; }
.sl { width: 49px; }
.status svg { margin: 14px 1px 0 0; }
```
